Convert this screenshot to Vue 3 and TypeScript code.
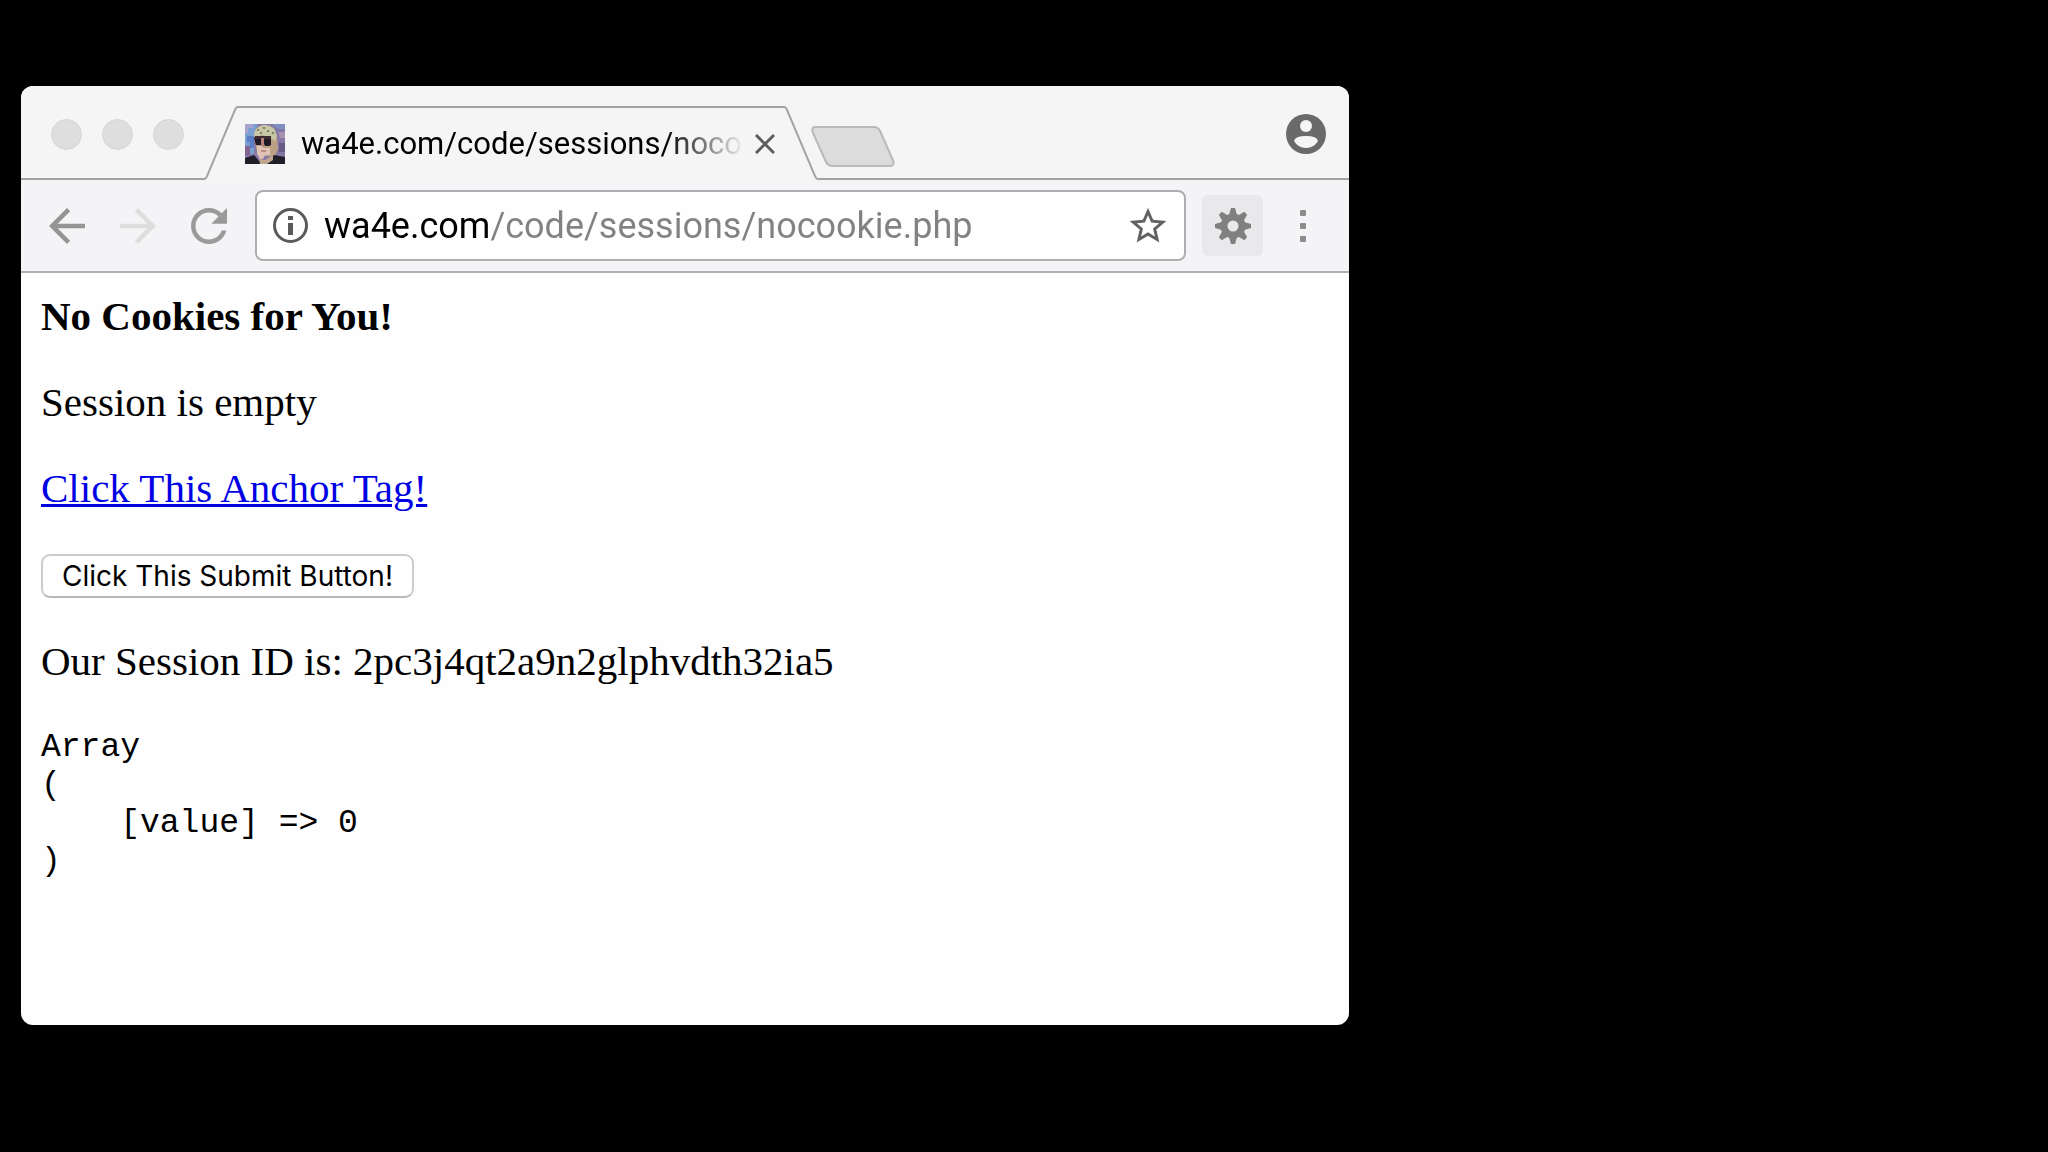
<script setup lang="ts">
import { ref } from 'vue'

const address = ref('wa4e.com/code/sessions/nocookie.php')
const tabTitle = 'wa4e.com/code/sessions/noco'
const sessionId = '2pc3j4qt2a9n2glphvdth32ia5'
const dump = `Array
(
    [value] => 0
)`
const gearTeeth = [0, 45, 90, 135, 180, 225, 270, 315]
</script>

<template>
  <main class="desktop">
    <section class="window">
      <header class="strip">
        <div class="lead">
          <button class="light" type="button" aria-label="Close window"></button>
          <button class="light" type="button" aria-label="Minimize window"></button>
          <button class="light" type="button" aria-label="Zoom window"></button>
        </div>
        <svg class="slant" viewBox="0 0 34 74" aria-hidden="true">
          <path d="M0 73 Q2 73 3 70 L31 4 Q32 1 34 1" />
        </svg>
        <div class="tab">
          <svg class="favicon" viewBox="0 0 40 40" aria-hidden="true">
            <rect width="40" height="40" fill="#8577a6" />
            <path d="M0 0H13L9 10V30H0Z" fill="#7c9fd2" />
            <path d="M2 12H9V24H5V18H2Z" fill="#5b7ec4" />
            <path d="M0 0H8V4H3V9H0Z" fill="#a9a4c9" />
            <path d="M0 22H5V31H0Z" fill="#80638f" />
            <path d="M27 0H40V5H33Z" fill="#7d8fc0" />
            <path d="M33 8H40V14H35Z" fill="#a892ae" />
            <path d="M34 19H40V28H34Z" fill="#695986" />
            <path d="M10 14Q10 8 18 8Q29 8 32 12L33 25L30 32H14L11 24Z" fill="#bda184" />
            <path d="M9 14Q8 3 18 1Q30 0 32 12L30 17L26 14L17 11L10 14Z" fill="#c6c8a5" />
            <path d="M12 5h2v2h-2zM18 3h2v2h-2zM22 6h2v2h-2zM15 8h2v2h-2zM27 8h2v2h-2z" fill="#817d63" />
            <path d="M9 13H17V21H11L10 18ZM19 14H26V21L24 22H20L19 20Z" fill="#211a25" />
            <path d="M10 12H26V15H10Z" fill="#3d2a32" />
            <path d="M16 14H19V22H16Z" fill="#b67f7a" />
            <path d="M12 22H16L19 24H25V31H20L18 35H15L12 30Z" fill="#e1c3b5" />
            <path d="M16 26H21V28H16Z" fill="#b98d86" />
            <path d="M0 40V34L9 31L14 37H22L29 31L40 33V40Z" fill="#201e29" />
            <path d="M14 35L20 36L28 31V36L22 40H15Z" fill="#c0a58f" />
          </svg>
          <span class="title">{{ tabTitle }}</span>
          <button class="plain close" type="button" aria-label="Close tab">
            <svg viewBox="0 0 20 20" aria-hidden="true"><path d="M1 1L19 19M19 1L1 19" /></svg>
          </button>
        </div>
        <svg class="slant" viewBox="0 0 34 74" aria-hidden="true">
          <path d="M34 73 Q32 73 31 70 L3 4 Q2 1 0 1" />
        </svg>
        <div class="rest">
          <button class="plain new-tab" type="button" aria-label="New tab">
            <svg viewBox="0 0 84 42" aria-hidden="true">
              <path d="M4 1H63Q67 1 69 5L82 34Q84 40 79 40H22Q17 40 15 36L2 7Q0 1 4 1Z" />
            </svg>
          </button>
          <button class="plain profile" type="button" aria-label="Profile">
            <svg viewBox="0 0 48 48" aria-hidden="true">
              <circle cx="24" cy="24" r="20" fill="#6a6a6a" />
              <circle cx="24" cy="16" r="6" fill="#f5f5f6" />
              <path d="M12 31Q13 26 24 26T36 31Q32 38 24 38T12 31Z" fill="#f5f5f6" />
            </svg>
          </button>
        </div>
      </header>

      <nav class="toolbar">
        <button class="plain nav" type="button" aria-label="Back">
          <svg viewBox="0 0 24 24" fill="#959595" aria-hidden="true">
            <path d="M20 11H7.83l5.59-5.59L12 4l-8 8 8 8 1.41-1.41L7.83 13H20v-2z" />
          </svg>
        </button>
        <button class="plain nav" type="button" aria-label="Forward">
          <svg viewBox="0 0 24 24" fill="#dedede" aria-hidden="true">
            <path d="M12 4l-1.41 1.41L16.17 11H4v2h12.17l-5.58 5.59L12 20l8-8z" />
          </svg>
        </button>
        <button class="plain nav" type="button" aria-label="Reload">
          <svg viewBox="0 0 24 24" fill="#9a9a9a" aria-hidden="true">
            <path
              d="M17.65 6.35C16.2 4.9 14.21 4 12 4c-4.42 0-7.99 3.58-7.99 8s3.57 8 7.99 8c3.73 0 6.84-2.55 7.73-6h-2.08c-.82 2.33-3.04 4-5.65 4-3.31 0-6-2.69-6-6s2.69-6 6-6c1.66 0 3.14.69 4.22 1.78L13 11h7V4l-2.35 2.35z"
            />
          </svg>
        </button>
        <div class="omnibox">
          <button class="plain info" type="button" aria-label="Site information">
            <svg viewBox="0 0 43 43" aria-hidden="true">
              <circle cx="21.5" cy="21.5" r="16" fill="none" stroke="#5a5a5a" stroke-width="3" />
              <path d="M19 12H24V16H19ZM19 19H24V31H19Z" fill="#5a5a5a" />
            </svg>
          </button>
          <input v-model="address" class="address" type="text" aria-label="Address" spellcheck="false" />
          <button class="plain star" type="button" aria-label="Bookmark this page">
            <svg viewBox="0 0 24 24" fill="#626262" aria-hidden="true">
              <path
                d="M22 9.24l-7.19-.62L12 2 9.19 8.63 2 9.24l5.46 4.73L5.82 21 12 17.27 18.18 21l-1.63-7.03L22 9.24zM12 15.4l-3.76 2.27 1-4.28-3.32-2.88 4.38-.38L12 6.1l1.71 4.04 4.38.38-3.32 2.88 1 4.28L12 15.4z"
              />
            </svg>
          </button>
        </div>
        <button class="plain gear" type="button" aria-label="Extension settings">
          <svg viewBox="-20 -20 40 40" aria-hidden="true">
            <circle r="9" fill="none" stroke="#808080" stroke-width="7" />
            <path
              v-for="angle in gearTeeth"
              :key="angle"
              d="M-4 -11L-2 -18H2L4 -11Z"
              fill="#808080"
              :transform="`rotate(${angle})`"
            />
          </svg>
        </button>
        <button class="plain menu" type="button" aria-label="Menu">
          <svg viewBox="0 0 8 36" fill="#8c8c8c" aria-hidden="true">
            <rect x="1" y="2" width="6" height="6" rx="1" />
            <rect x="1" y="15" width="6" height="6" rx="1" />
            <rect x="1" y="28" width="6" height="6" rx="1" />
          </svg>
        </button>
      </nav>

      <article class="page">
        <p><b>No Cookies for You!</b></p>
        <p>Session is empty</p>
        <p><a href="#">Click This Anchor Tag!</a></p>
        <form @submit.prevent>
          <button class="submit" type="submit">Click This Submit Button!</button>
        </form>
        <p>Our Session ID is: {{ sessionId }}</p>
        <pre>{{ dump }}</pre>
      </article>
    </section>
  </main>
</template>

<style>
body {
  background: #000;
}
</style>

<style scoped>
.desktop {
  box-sizing: border-box;
  min-height: 100vh;
  padding: 86px 0 86px 21px;
  display: grid;
  grid-template-columns: 1328fr 699fr;
  align-items: start;
  background: #000;
}

.window {
  min-width: 0;
  border-radius: 12px;
  overflow: hidden;
  background: #fefefe;
}

.plain {
  padding: 0;
  border: 0;
  background: none;
  flex: none;
}

svg {
  display: block;
}

.strip {
  display: flex;
  align-items: stretch;
  height: 94px;
  background: #f5f5f6;
}

.lead,
.rest {
  box-sizing: border-box;
  border-bottom: 2px solid #a3a3a4;
  display: flex;
  align-items: flex-start;
}

.lead {
  flex: none;
  width: 183px;
  padding: 33px 0 0 30px;
  gap: 20px;
}

.light {
  flex: none;
  width: 31px;
  height: 31px;
  padding: 0;
  border: 1px solid #d6d6d6;
  border-radius: 50%;
  background: #dedede;
}

.slant {
  flex: none;
  width: 34px;
  height: 74px;
  margin-top: 20px;
  fill: none;
  stroke: #a3a3a4;
  stroke-width: 2;
}

.tab {
  box-sizing: border-box;
  flex: 0 1 546px;
  min-width: 0;
  margin-top: 20px;
  padding: 0 9px 0 7px;
  border-top: 2px solid #a3a3a4;
  display: flex;
  align-items: center;
}

.favicon {
  flex: none;
  width: 40px;
  height: 40px;
}

.title {
  flex: 1;
  min-width: 0;
  margin: 0 10px 0 16px;
  overflow: hidden;
  white-space: nowrap;
  font: 31px/40px Roboto, sans-serif;
  color: #000;
  mask-image: linear-gradient(to left, transparent, #000 80px);
}

.close svg {
  width: 20px;
  height: 20px;
  fill: none;
  stroke: #5c5c5c;
  stroke-width: 3;
}

.rest {
  flex: 1;
}

.new-tab {
  margin: 40px 0 0 -7px;
}

.new-tab svg {
  width: 84px;
  height: 42px;
  fill: #dcdcdc;
  stroke: #b9b9b9;
  stroke-width: 2;
}

.profile {
  margin: 24px 19px 0 auto;
}

.profile svg {
  width: 48px;
  height: 48px;
}

.toolbar {
  display: flex;
  align-items: center;
  padding: 10px 42px 10px 19px;
  border-bottom: 2px solid #b0b0b2;
  background: #f4f4f6;
}

.nav {
  margin-right: 17px;
}

.nav svg {
  width: 54px;
  height: 54px;
}

.omnibox {
  flex: 1;
  min-width: 0;
  box-sizing: border-box;
  height: 71px;
  margin: 0 16px 0 2px;
  padding: 0 14px 0 12px;
  display: flex;
  align-items: center;
  border: 2px solid #aeaeb0;
  border-radius: 8px;
  background: #fefefe;
}

.info svg {
  width: 43px;
  height: 43px;
}

.address {
  flex: 1;
  min-width: 0;
  height: 48px;
  margin: 0 0 0 12px;
  padding: 0;
  border: 0;
  outline: 0;
  font: 36px/48px Roboto, sans-serif;
  color: transparent;
  background: linear-gradient(to right, #000 167px, #828282 167px);
  background-clip: text;
}

.star svg {
  width: 44px;
  height: 44px;
}

.gear {
  width: 61px;
  height: 61px;
  margin-right: 36px;
  display: grid;
  place-items: center;
  border-radius: 6px;
  background: #e9e8ea;
}

.gear svg {
  width: 40px;
  height: 40px;
}

.menu svg {
  width: 8px;
  height: 36px;
}

.page {
  padding: 20px 20px 144px;
  font: 41px/46px "Liberation Serif", serif;
  color: #000;
}

p {
  margin: 0 0 40px;
}

a {
  color: #0000e4;
  text-decoration-thickness: 3px;
}

form {
  height: 47px;
  margin: 0 0 40px;
  display: flex;
  align-items: flex-end;
}

.submit {
  height: 44px;
  padding: 0 19px;
  border: 2px solid #cdcdcd;
  border-bottom-color: #b9b9b9;
  border-radius: 9px;
  background: #fff;
  font: 28px/36px Inter, sans-serif;
  color: #000;
}

pre {
  margin: 45px 0 0;
  font: 33px/38px "Liberation Mono", monospace;
}
</style>
